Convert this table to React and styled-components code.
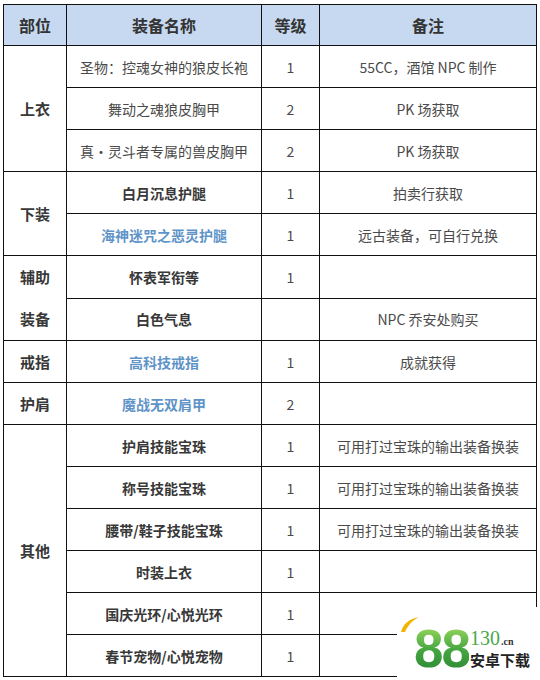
import React from "react";
import styled, { createGlobalStyle } from "styled-components";

const Global = createGlobalStyle`
  html, body { margin: 0; padding: 0; background: #fff; }
  body { width: 540px; height: 680px; overflow: hidden; font-family: "Noto Sans CJK SC", "Noto Sans", sans-serif; }
`;

const Page = styled.div`
  position: relative;
  width: 540px;
  height: 680px;
  padding: 4px 0 0 3px;
  box-sizing: border-box;
`;

const Table = styled.table`
  border-collapse: collapse;
  table-layout: fixed;
  width: 533px;
  font-size: 14px;
  color: #444;
`;

const HeadCell = styled.th`
  background: #c6d9f0;
  border: 1px solid #111;
  height: 40px;
  padding: 0;
  font-size: 16px;
  font-weight: 700;
  color: #333;
  text-align: center;
  vertical-align: middle;
`;

const Cell = styled.td`
  border: 1px solid #111;
  height: 41px;
  padding: 0;
  text-align: center;
  vertical-align: middle;
  font-weight: ${(p) => (p.$bold ? 700 : 400)};
  color: ${(p) => (p.$blue ? "#5f94c8" : p.$bold ? "#383838" : "#4a4a4a")};
  font-size: ${(p) => (p.$part ? "15px" : "14px")};
  white-space: nowrap;
`;

const StackLine = styled.div`
  height: 42px;
  line-height: 42px;
`;

const Logo = styled.div`
  position: absolute;
  left: 397px;
  top: 607px;
  width: 143px;
  height: 73px;
  background: #fff;
`;

const LogoInner = styled.div`
  width: 100%;
  height: 100%;
  display: flex;
  align-items: flex-start;
  padding: 22px 0 0 17px;
  box-sizing: border-box;
  white-space: nowrap;
`;

const Eights = styled.div`
  font-family: "Liberation Sans", sans-serif;
  font-weight: 700;
  font-size: 53px;
  line-height: 40px;
  height: 42px;
  letter-spacing: -2px;
  color: #45a845;
  background: linear-gradient(180deg, #8fd05a 0%, #45a640 50%, #2e8a35 100%);
  -webkit-background-clip: text;
  background-clip: text;
  -webkit-text-fill-color: transparent;
`;

const LogoText = styled.div`
  display: flex;
  flex-direction: column;
  margin-left: 1px;
  padding-top: 1px;
`;

const Domain = styled.div`
  font-family: "Liberation Serif", serif;
  font-size: 20px;
  line-height: 16px;
  color: #4aa84a;
  small {
    font-size: 10px;
    font-weight: 700;
    color: #333;
    margin-left: 1px;
  }
`;

const Cn = styled.div`
  font-family: "Noto Sans CJK SC", sans-serif;
  font-weight: 700;
  font-size: 15px;
  line-height: 19px;
  color: #222;
`;

const Swoosh = styled.svg`
  position: absolute;
  left: 3px;
  top: 8px;
`;

const rows = [
  { part: "上衣", span: 3, name: "圣物：控魂女神的狼皮长袍", lv: "1", note: "55CC，酒馆 NPC 制作" },
  { name: "舞动之魂狼皮胸甲", lv: "2", note: "PK 场获取" },
  { name: "真·灵斗者专属的兽皮胸甲", lv: "2", note: "PK 场获取" },
  { part: "下装", span: 2, name: "白月沉息护腿", bold: true, lv: "1", note: "拍卖行获取" },
  { name: "海神迷咒之恶灵护腿", bold: true, blue: true, lv: "1", note: "远古装备，可自行兑换" },
  { partLines: ["辅助", "装备"], span: 2, name: "怀表军衔等", bold: true, lv: "1", note: "" },
  { name: "白色气息", bold: true, lv: "", note: "NPC 乔安处购买" },
  { part: "戒指", span: 1, name: "高科技戒指", bold: true, blue: true, lv: "1", note: "成就获得" },
  { part: "护肩", span: 1, name: "魔战无双肩甲", bold: true, blue: true, lv: "2", note: "" },
  { part: "其他", span: 6, name: "护肩技能宝珠", bold: true, lv: "1", note: "可用打过宝珠的输出装备换装" },
  { name: "称号技能宝珠", bold: true, lv: "1", note: "可用打过宝珠的输出装备换装" },
  { name: "腰带/鞋子技能宝珠", bold: true, lv: "1", note: "可用打过宝珠的输出装备换装" },
  { name: "时装上衣", bold: true, lv: "1", note: "" },
  { name: "国庆光环/心悦光环", bold: true, lv: "1", note: "" },
  { name: "春节宠物/心悦宠物", bold: true, lv: "1", note: "" },
];

export default function App() {
  return (
    <>
      <Global />
      <Page>
        <Table>
          <colgroup>
            <col style={{ width: 63 }} />
            <col style={{ width: 195 }} />
            <col style={{ width: 58 }} />
            <col style={{ width: 217 }} />
          </colgroup>
          <thead>
            <tr>
              <HeadCell>部位</HeadCell>
              <HeadCell>装备名称</HeadCell>
              <HeadCell>等级</HeadCell>
              <HeadCell>备注</HeadCell>
            </tr>
          </thead>
          <tbody>
            {rows.map((r, i) => (
              <tr key={i}>
                {r.part && (
                  <Cell $bold $part rowSpan={r.span}>
                    {r.part}
                  </Cell>
                )}
                {r.partLines && (
                  <Cell $bold $part rowSpan={r.span}>
                    {r.partLines.map((l) => (
                      <StackLine key={l}>{l}</StackLine>
                    ))}
                  </Cell>
                )}
                <Cell $bold={r.bold} $blue={r.blue}>
                  {r.name}
                </Cell>
                <Cell>{r.lv}</Cell>
                <Cell>{r.note}</Cell>
              </tr>
            ))}
          </tbody>
        </Table>
        <Logo>
          <Swoosh width="20" height="18" viewBox="0 0 20 18">
            <path d="M1 17 C3 9 9 4 19 2 C13 5 8 10 5 17 Z" fill="#f2b400" />
          </Swoosh>
          <LogoInner>
            <Eights>88</Eights>
            <LogoText>
              <Domain>
                130<small>.cn</small>
              </Domain>
              <Cn>安卓下载</Cn>
            </LogoText>
          </LogoInner>
        </Logo>
      </Page>
    </>
  );
}
